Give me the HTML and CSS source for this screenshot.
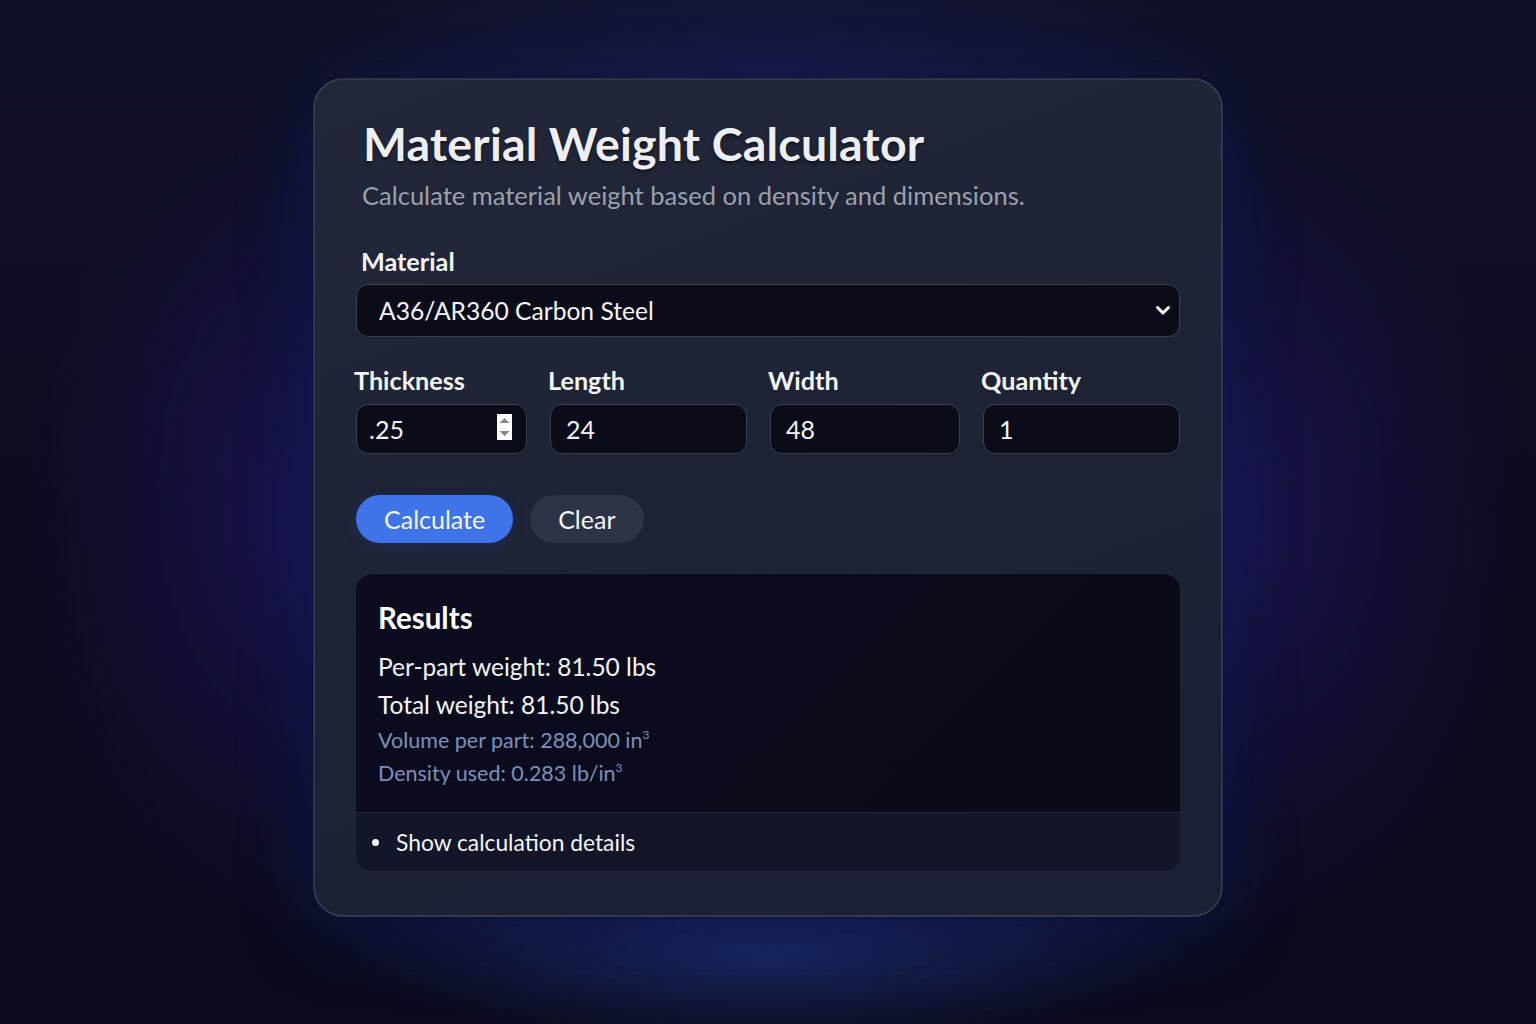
FILE: index.html
```html
<!DOCTYPE html>
<html lang="en">
<head>
<meta charset="utf-8">
<title>Material Weight Calculator</title>
<link rel="stylesheet" href="styles.css">
</head>
<body>
<main class="card">
  <h1 class="title">Material Weight Calculator</h1>
  <p class="subtitle">Calculate material weight based on density and dimensions.</p>

  <label class="label label-material" for="material">Material</label>
  <div class="select-wrap">
    <select id="material" class="select">
      <option>A36/AR360 Carbon Steel</option>
    </select>
    <svg class="chevron" width="16" height="12" viewBox="0 0 16 12"><path d="M2.5 3.5 L8 9 L13.5 3.5" fill="none" stroke="#ffffff" stroke-width="3" stroke-linecap="round" stroke-linejoin="round"/></svg>
  </div>

  <div class="dims">
    <div class="field">
      <label class="label" for="thk">Thickness</label>
      <input id="thk" class="input" type="number" value=".25" step="0.01">
    </div>
    <div class="field">
      <label class="label" for="len">Length</label>
      <input id="len" class="input" type="text" value="24">
    </div>
    <div class="field">
      <label class="label" for="wid">Width</label>
      <input id="wid" class="input" type="text" value="48">
    </div>
    <div class="field">
      <label class="label" for="qty">Quantity</label>
      <input id="qty" class="input" type="text" value="1">
    </div>
  </div>

  <div class="actions">
    <button class="btn btn-primary">Calculate</button>
    <button class="btn btn-secondary">Clear</button>
  </div>

  <section class="results">
    <div class="results-body">
      <h2 class="results-title">Results</h2>
      <p class="res-main">Per-part weight: 81.50 lbs</p>
      <p class="res-main">Total weight: 81.50 lbs</p>
      <p class="res-sub">Volume per part: 288,000 in<sup>3</sup></p>
      <p class="res-sub">Density used: 0.283 lb/in<sup>3</sup></p>
    </div>
    <div class="details">
      <span class="bullet"></span>
      <span class="details-text">Show calculation details</span>
    </div>
  </section>
</main>
</body>
</html>
```

FILE: styles.css
```css
* { box-sizing: border-box; }

html, body {
  margin: 0;
  height: 100%;
}

body {
  font-family: Lato, "Noto Sans", "Liberation Sans", sans-serif;
  color: #f1f3f7;
  background-color: #0b0c1e;
  background-image:
    radial-gradient(ellipse 420px 90px at 768px 955px, rgba(40, 70, 170, 0.45), transparent 100%),
    radial-gradient(ellipse 260px 420px at 290px 520px, rgba(40, 30, 140, 0.40), transparent 100%),
    radial-gradient(ellipse 260px 420px at 1250px 520px, rgba(40, 30, 140, 0.40), transparent 100%),
    radial-gradient(ellipse 500px 120px at 768px 70px, rgba(35, 40, 120, 0.35), transparent 100%),
    linear-gradient(180deg, #0f1128 0%, #0b0c1f 50%, #0a0b1c 100%);
  overflow: hidden;
}

.card {
  width: 910px;
  margin: 78px auto 0;
  padding: 37px 41px 44px;
  border-radius: 30px;
  border: 2px solid rgba(120, 130, 170, 0.22);
  background: linear-gradient(160deg, #222739 0%, #1d2234 55%, #1b2035 100%);
  box-shadow: 0 20px 70px rgba(20, 30, 110, 0.45), 0 0 0 1px rgba(0, 0, 0, 0.3);
  display: flex;
  flex-direction: column;
}

.title {
  margin: 0 0 0 7px;
  font-size: 46.5px;
  font-weight: 700;
  line-height: 52px;
  color: #eceef2;
  letter-spacing: 0.2px;
  text-shadow: 0 2px 3px rgba(0, 0, 0, 0.5);
}

.subtitle {
  margin: 10px 0 0 6px;
  font-size: 25.5px;
  line-height: 32px;
  color: #9ba1ad;
}

.label {
  display: block;
  font-size: 25.2px;
  font-weight: 700;
  line-height: 32px;
  color: #f4f5f8;
}

.label-material {
  margin: 34px 0 7px 5px;
}

.select-wrap {
  position: relative;
}

.select {
  display: block;
  width: 100%;
  height: 53px;
  padding: 0 50px 0 22px;
  appearance: none;
  -webkit-appearance: none;
  background: #0a0c19;
  border: 1px solid #3b4054;
  border-radius: 12px;
  color: #f4f5f8;
  font-family: inherit;
  font-size: 24.6px;
}

.chevron {
  position: absolute;
  right: 9px;
  top: 20px;
  pointer-events: none;
}

.dims {
  display: grid;
  grid-template-columns: 171px 197px 190px 1fr;
  column-gap: 23px;
  margin-top: 27px;
}

.field .label {
  margin: 0 0 8px -2px;
}

.input {
  display: block;
  width: 100%;
  height: 50px;
  padding: 0 14px 0 15px;
  background: #0a0c19;
  border: 1px solid #3b4054;
  border-radius: 12px;
  color: #f4f5f8;
  font-family: inherit;
  font-size: 25px;
  color-scheme: light;
}

#thk { padding-left: 12px; }

.input::-webkit-inner-spin-button {
  opacity: 1;
  height: 26px;
}

.actions {
  display: flex;
  gap: 17px;
  margin-top: 41px;
}

.btn {
  height: 48px;
  border: none;
  border-radius: 24px;
  font-family: inherit;
  font-size: 25px;
  color: #f4f6fb;
}

.btn-primary {
  padding: 0 28px;
  background: #3f74e9;
  box-shadow: 0 4px 14px rgba(40, 90, 220, 0.18);
}

.btn-secondary {
  background: #2e3346;
  padding: 0 28px;
}

.results {
  margin-top: 31px;
  border-radius: 16px;
  background: linear-gradient(135deg, #0b0d1f 0%, #090b1a 100%);
  overflow: hidden;
  box-shadow: 0 0 0 1px rgba(255, 255, 255, 0.02);
}

.results-body {
  padding: 25px 22px 22px;
  border-bottom: 1px solid #21263a;
}

.results-title {
  margin: 0 0 11px;
  font-size: 29.5px;
  font-weight: 700;
  line-height: 38px;
  color: #ffffff;
}

.res-main {
  margin: 0;
  font-size: 24.5px;
  line-height: 38px;
  color: #f4f5f8;
}

.res-sub {
  margin: 0;
  font-size: 21.5px;
  line-height: 33px;
  color: #7d8fbb;
}

.res-sub sup {
  font-size: 12px;
  vertical-align: 9px;
  line-height: 0;
}

.details {
  display: flex;
  align-items: center;
  gap: 17px;
  height: 58px;
  padding: 0 16px;
  background: #121628;
}

.bullet {
  width: 7px;
  height: 7px;
  border-radius: 50%;
  background: #f4f5f8;
}

.details-text {
  font-size: 22.8px;
  color: #f4f5f8;
}
```
